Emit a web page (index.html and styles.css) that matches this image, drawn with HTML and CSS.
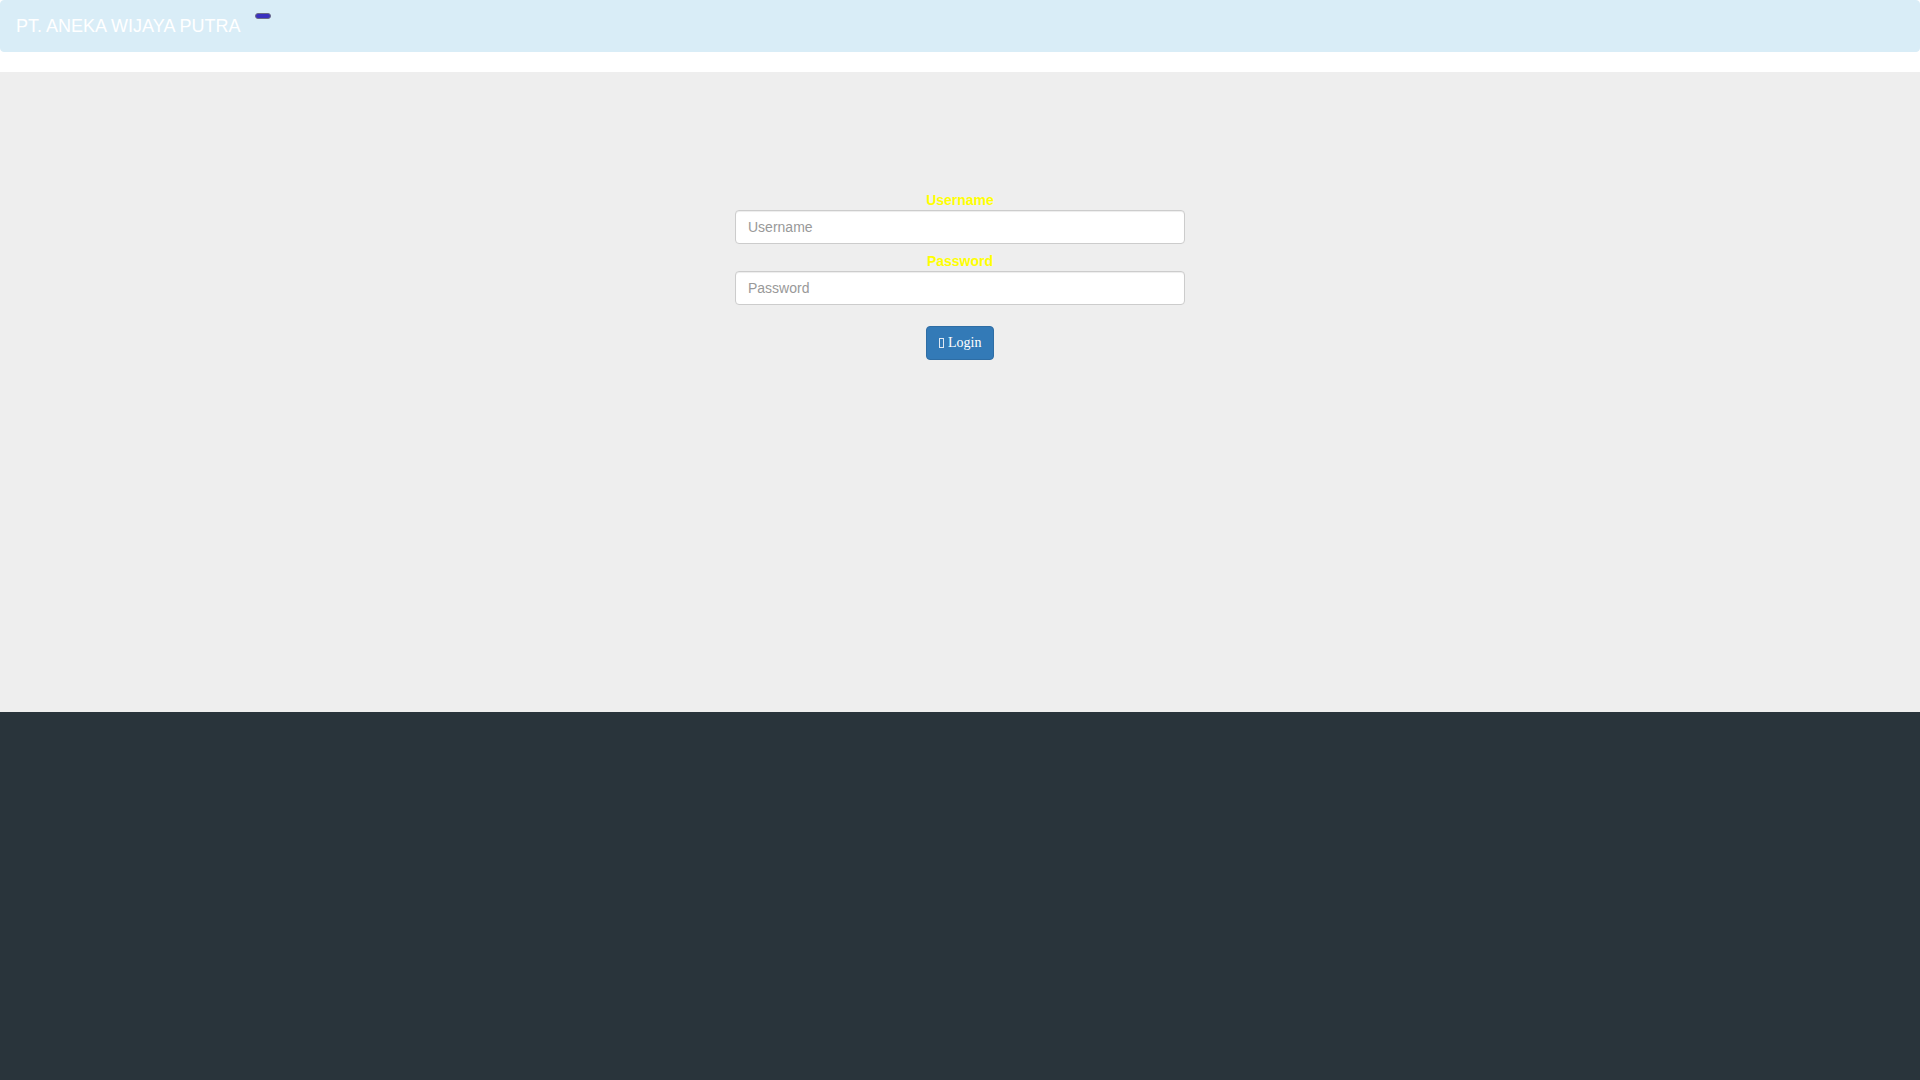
FILE: index.html
```html
<!DOCTYPE html>
<html lang="id">
<head>
<meta charset="utf-8">
<title>PT. ANEKA WIJAYA PUTRA</title>
<link rel="stylesheet" href="styles.css">
</head>
<body>
<nav class="navbar">
  <a class="brand" href="#">PT. ANEKA WIJAYA PUTRA</a>
  <span class="pill"></span>
</nav>
<main class="content">
  <form class="login-form">
    <label class="field-label" for="username">Username</label>
    <input class="field-input" id="username" type="text" placeholder="Username">
    <label class="field-label second" for="password">Password</label>
    <input class="field-input" id="password" type="password" placeholder="Password">
    <div class="actions">
      <button class="btn-login" type="button"><span class="tofu"></span> Login</button>
    </div>
  </form>
</main>
<footer class="footer"></footer>
</body>
</html>
```
FILE: styles.css
```css
html, body {
  margin: 0;
  padding: 0;
}
body {
  font-family: "Liberation Sans", Arial, sans-serif;
  font-size: 14px;
  line-height: 20px;
  color: #333;
  background: #fff;
}
.navbar {
  display: flex;
  align-items: flex-start;
  height: 50px;
  background: #d9edf7;
  border: 1px solid #d9edf7;
  border-radius: 4px;
  margin-bottom: 20px;
}
.brand {
  padding: 15px;
  font-size: 18px;
  line-height: 20px;
  color: #fff;
  text-decoration: none;
}
.pill {
  display: block;
  width: 14px;
  height: 4px;
  margin-top: 12px;
  background: #3a30bf;
  border: 1px solid #6b6b86;
  border-radius: 3px;
}
.content {
  background: #eeeeee;
  height: 522px;
  padding-top: 118px;
}
.login-form {
  width: 450px;
  margin: 0 auto;
}
.field-label {
  display: block;
  text-align: center;
  font-weight: bold;
  color: #ffff00;
  line-height: 20px;
}
.field-label.second {
  margin-top: 7px;
}
.field-input {
  display: block;
  box-sizing: border-box;
  width: 100%;
  height: 34px;
  margin: 0;
  padding: 6px 12px;
  font-family: "Liberation Sans", Arial, sans-serif;
  font-size: 14px;
  color: #555;
  background: #fff;
  border: 1px solid #ccc;
  border-radius: 4px;
  box-shadow: inset 0 1px 1px rgba(0,0,0,.075);
}
.field-input::placeholder {
  color: #999;
}
.actions {
  text-align: center;
  margin-top: 21px;
}
.btn-login {
  display: inline-block;
  margin: 0;
  padding: 6px 12px;
  font-family: "Liberation Serif", "Times New Roman", serif;
  font-size: 14px;
  line-height: 20px;
  color: #fff;
  background: #337ab7;
  border: 1px solid #2e6da4;
  border-radius: 4px;
}
.tofu {
  display: inline-block;
  box-sizing: border-box;
  width: 5px;
  height: 10px;
  margin-right: 1px;
  border: 1px solid #dfe8f2;
  vertical-align: -1px;
}
.footer {
  background: #29343b;
  height: 368px;
}
```
